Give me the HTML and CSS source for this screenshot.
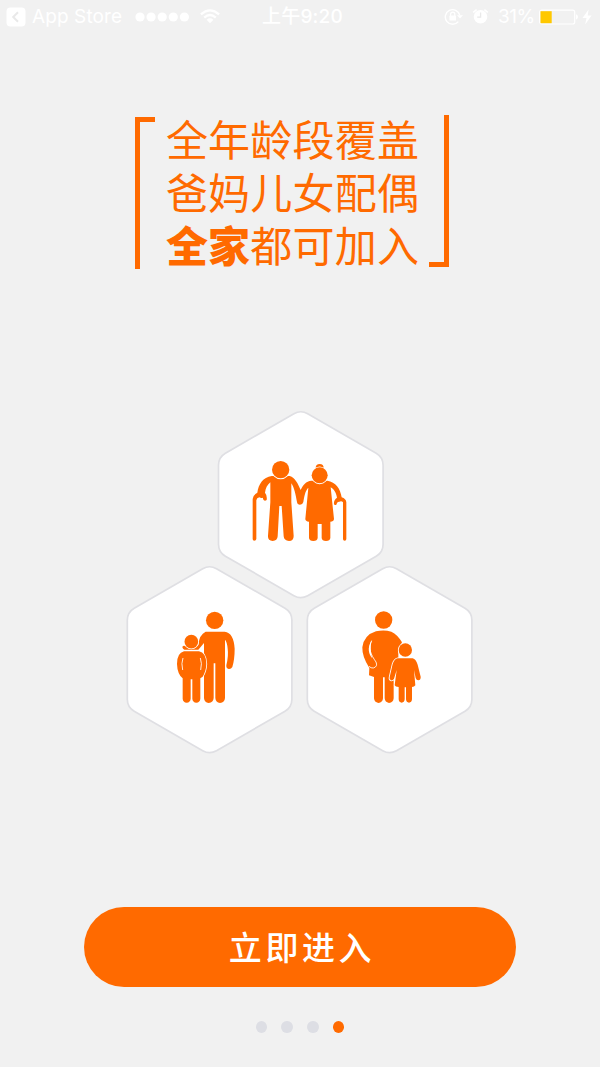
FILE: index.html
```html
<!DOCTYPE html>
<html lang="zh-CN">
<head>
<meta charset="utf-8">
<title>全家都可加入</title>
<link rel="stylesheet" href="styles.css">
</head>
<body>
<main class="screen">
  <header class="status">
    <div class="status-left">
      <svg class="back" width="20" height="20" viewBox="0 0 20 20"><rect x=".5" y=".5" width="19" height="19" rx="4" fill="#fff"/><path d="M12 5.2 7.2 10l4.8 4.8" fill="none" stroke="#e9e9e9" stroke-width="2"/></svg>
      <span class="back-label">App Store</span>
      <svg class="signal" width="56" height="10" viewBox="0 0 56 10" fill="#fff"><circle cx="5" cy="5" r="4.6"/><circle cx="16.1" cy="5" r="4.6"/><circle cx="27.2" cy="5" r="4.6"/><circle cx="38.3" cy="5" r="4.6"/><circle cx="49.4" cy="5" r="4.6"/></svg>
      <svg class="wifi" width="20" height="15" viewBox="0 0 20 15" fill="none" stroke="#fff" stroke-width="2.3"><path d="M.9 5.3Q10-2.6 19.1 5.3M4.2 8.6Q10 3.5 15.8 8.6"/><path d="M6.6 10.7Q10 7.8 13.4 10.7L10 14.3Z" fill="#fff" stroke="none"/></svg>
    </div>
    <div class="time">上午9:20</div>
    <div class="status-right">
      <svg width="19" height="18" viewBox="0 0 19 18"><path d="M15.7 7.2A7.3 7.3 0 1 0 14.3 13.6" fill="none" stroke="#fff" stroke-width="1.4"/><path d="M13 7.2H19L16 10.6Z" fill="#fff"/><rect x="5.4" y="7.6" width="6.6" height="5" rx=".6" fill="#fff"/><path d="M6.6 8V6.2a2.1 2.1 0 0 1 4.2 0V8" fill="none" stroke="#fff" stroke-width="1.2"/></svg>
      <svg class="alarm" width="17" height="17" viewBox="0 0 17 17"><circle cx="8.5" cy="8.8" r="6.8" fill="#fff"/><path d="M1.2 4.4 4.6 1.6M15.8 4.4 12.4 1.6" stroke="#fff" stroke-width="1.6"/><path d="M8.6 4.6V9.1H5.2" fill="none" stroke="#e9e9e9" stroke-width="1.3"/></svg>
      <span class="percent">31%</span>
      <svg class="battery" width="40" height="16" viewBox="0 0 40 16"><rect x=".7" y="1.2" width="35" height="13.8" rx="2" fill="none" stroke="#fff" stroke-width="1.2"/><rect x="1.5" y="2.2" width="11.2" height="12" fill="#ffc800"/><path d="M37 5.3q2 .8 2 2.7t-2 2.7Z" fill="#fff"/></svg>
      <svg class="bolt" width="10" height="16" viewBox="0 0 10 16"><path d="M6.6.5.5 9h4L3.2 15.5 9.6 6.5H5.7Z" fill="#fff"/></svg>
    </div>
  </header>

  <section class="headline">
    <span class="bracket bracket-open"></span>
    <h1 class="slogan">全年龄段覆盖<br>爸妈儿女配偶<br><strong class="strong">全家</strong>都可加入</h1>
    <span class="bracket bracket-close"></span>
  </section>

  <section class="family">
    <svg class="hex" viewBox="216 409 168 192">
      <path class="hex-shape" transform="translate(216.4 409)" d="M77.5 4.7A14 14 0 0 1 91.3 4.7L159.8 44.2A14 14 0 0 1 166.7 56.2V135.2A14 14 0 0 1 159.8 147.2L91.3 186.7A14 14 0 0 1 77.5 186.7L9 147.2A14 14 0 0 1 2.1 135.2V56.2A14 14 0 0 1 9 44.2Z"/>
      <g class="figure" transform="translate(245 452) scale(.33333)">
        <path d="M80 72H134C151 77 158 94 167 114C174 98 183 88 199 86H247C272 90 286 109 290 136Q303 140 304 151V261Q304 266 299 266T294 261V151Q290 146 283 149Q276 148 274 158Q269 161 267 157C266 146 270 141 276 137C273 120 266 111 257 106L267 201Q266 209 256 209V258Q255 267 243 267T230 258V216H218V258Q217 267 205 267T192 258V209Q181 208 181 201L190 107C180 117 178 134 175 150Q173 158 165 158T156 150C152 128 148 107 139 94V151L146 252Q146 267 132 267Q117 266 116 253L110 162H103L98 253Q97 267 83 267Q68 266 69 252L76 151V91C66 99 62 109 60 122Q67 130 65 144Q58 150 54 141V137Q48 139 43 136Q35 137 34 145V261Q33 266 28 266T23 261V141Q25 128 37 122C41 96 54 76 80 72Z"/>
        <circle class="head" cx="107" cy="53" r="26"/>
        <circle cx="224" cy="48" r="12"/>
        <circle class="head" cx="224" cy="70" r="24"/>
      </g>
    </svg>
    <div class="family-row">
      <svg class="hex" viewBox="125 564.5 168 192">
        <path class="hex-shape" transform="translate(125.2 564.5)" d="M77.5 4.7A14 14 0 0 1 91.3 4.7L159.8 44.2A14 14 0 0 1 166.7 56.2V135.2A14 14 0 0 1 159.8 147.2L91.3 186.7A14 14 0 0 1 77.5 186.7L9 147.2A14 14 0 0 1 2.1 135.2V56.2A14 14 0 0 1 9 44.2Z"/>
        <g class="figure" transform="translate(165 602.5) scale(.33333)">
          <circle cx="149" cy="55" r="26"/>
          <path d="M122 89H179Q206 92 209 140Q209 172 202 195Q198 202 191 201Q183 199 184 190Q191 160 188 140Q186 119 180 113V288Q179 302 165 303Q152 301 151 288V184H146V288Q145 302 131 303Q118 301 117 288V123L100 143H58Q49 137 54 132Q59 129 66 135L100 128Q103 98 122 89Z"/>
          <path class="cut" d="M57 148H102Q123 151 124 186Q123 208 113 224L106 229V290Q105 301 94 302Q83 301 82 290V232H77V290Q76 301 65 302Q54 301 53 290V229Q37 216 36 186Q36 153 57 148Z"/>
          <path class="gap" d="M54 168Q48 184 53 204M106 168Q112 184 107 204"/>
          <circle class="head" cx="79" cy="119" r="20.5"/>
        </g>
      </svg>
      <svg class="hex" viewBox="305 564.5 168 192">
        <path class="hex-shape" transform="translate(305.2 564.5)" d="M77.5 4.7A14 14 0 0 1 91.3 4.7L159.8 44.2A14 14 0 0 1 166.7 56.2V135.2A14 14 0 0 1 159.8 147.2L91.3 186.7A14 14 0 0 1 77.5 186.7L9 147.2A14 14 0 0 1 2.1 135.2V56.2A14 14 0 0 1 9 44.2Z"/>
        <g class="figure" transform="translate(350 602.5) scale(.33333)">
          <circle cx="101" cy="54" r="26"/>
          <path d="M78 88Q102 82 124 89Q143 98 156 121L145 143V224H131V289Q130 302 117 303Q105 301 104 289V226H99V289Q98 302 85 303Q73 301 72 289V225L57 220L58 198Q36 164 37 136Q42 99 78 88Z"/>
          <path class="gap" d="M65 116C54 140 62 157 78 180Q84 194 70 198Q63 199 57 193"/>
          <path class="bend" d="M65 115C50 139 57 157 67 169Q58 142 65 115Z"/>
          <path class="cut" d="M143 169H188Q198 172 203 188L212 224Q213 233 205 235Q199 235 197 228L192 204L196 250Q193 255 186 255V292Q185 302 177 302Q169 302 168 292V256H164V292Q163 302 155 302Q147 302 146 292V255Q136 255 134 250L140 204L132 230Q129 236 123 235Q117 233 119 225L128 186Q133 171 143 169Z"/>
          <circle class="cut" cx="166" cy="144" r="20"/>
        </g>
      </svg>
    </div>
  </section>

  <button class="enter" type="button">立即进入</button>
  <nav class="dots"><i class="dot"></i><i class="dot"></i><i class="dot"></i><i class="dot dot-active"></i></nav>
</main>
</body>
</html>
```
FILE: styles.css
```css
* { box-sizing: border-box; }
body { margin: 0; background: #f1f1f1; }
svg { display: block; flex: none; }
.screen {
  width: 600px;
  height: 1067px;
  overflow: hidden;
  display: flex;
  flex-direction: column;
  align-items: center;
  font-family: "Noto Sans CJK SC", sans-serif;
  background: #f1f1f1;
}
.status {
  width: 600px;
  height: 32px;
  display: grid;
  grid-template-columns: 1fr 84px 1fr;
  align-items: center;
  color: #fff;
  font: 400 19px/32px Inter, "Noto Sans CJK SC", sans-serif;
}
.status-left { display: flex; align-items: center; padding-left: 6px; }
.back-label { width: 90px; margin-left: 6px; letter-spacing: .1px; white-space: nowrap; }
.signal { margin-left: 13px; }
.wifi { margin-left: 9px; }
.time { text-align: center; font-weight: 500; white-space: nowrap; padding-left: 4px; padding-top: 1px; letter-spacing: .2px; }
.status-right { display: flex; align-items: center; justify-content: flex-end; padding-right: 8px; }
.alarm { margin-left: 9px; }
.percent { margin-left: 9px; width: 37px; letter-spacing: -.5px; }
.battery { margin-left: 4px; }
.bolt { margin-left: 3px; }
.headline {
  width: 314px;
  height: 154px;
  margin-top: 83px;
  display: flex;
  justify-content: space-between;
  margin-right: 16px;
  color: #ff6a00;
}
.bracket { width: 20px; height: 152px; }
.bracket-open { margin-top: 2px; border-left: 5px solid; border-top: 5px solid; }
.bracket-close { border-right: 5px solid; border-bottom: 5px solid; }
.slogan {
  margin: -4px 0 0 1px;
  font-size: 42px;
  line-height: 53px;
  font-weight: 400;
  letter-spacing: .2px;
  white-space: nowrap;
}
.strong { font-weight: 900; }
.family { margin-top: 140px; display: flex; flex-direction: column; align-items: center; }
.hex { width: 168px; height: 192px; }
.hex-shape { fill: #fff; stroke: #dfdfe3; stroke-width: 1.7; }
.family-row { display: flex; gap: 12px; margin: -37px 2px 0 0; }
.figure { fill: #ff6a00; }
.head, .cut { stroke: #fff; stroke-width: 5; paint-order: stroke; }
.gap { fill: none; stroke: #fff; stroke-width: 2.6; }
.bend { fill: #fff; }
.enter {
  width: 432px;
  height: 80px;
  margin-top: 151px;
  padding: 0 0 2px 4px;
  border: 0;
  border-radius: 40px;
  background: #ff6a00;
  color: #fff;
  font: 500 33px/78px "Noto Sans CJK SC", sans-serif;
  letter-spacing: 3.6px;
}
.dots { display: flex; gap: 14.5px; margin-top: 34px; }
.dot { width: 11.3px; height: 12px; border-radius: 50%; background: #dddee4; }
.dot-active { background: #ff6a00; }
```
